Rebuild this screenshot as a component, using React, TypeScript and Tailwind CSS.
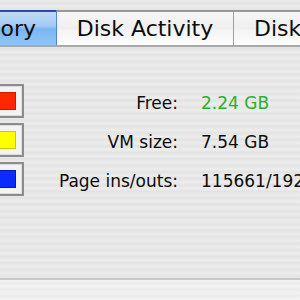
const rows = [
  { label: 'Free:', value: '2.24 GB', fill: 'bg-[#ff2600]', edge: 'border-[#c81c00]', green: true },
  { label: 'VM size:', value: '7.54 GB', fill: 'bg-[#ffff00]', edge: 'border-[#c9c900]', green: false },
  { label: 'Page ins/outs:', value: '115661/19286', fill: 'bg-[#0a2dff]', edge: 'border-[#0019b8]', green: false },
];

export default function App() {
  return (
    <div className="w-[300px] h-[300px] overflow-hidden flex flex-col font-['DejaVu_Sans',sans-serif] text-[#0d0d0d] bg-[image:repeating-linear-gradient(180deg,#ededed_0px,#e3e3e3_3px,#ededed_6.5px)]">
      <div className="h-[10px] shrink-0" />

      {/* tab strip */}
      <div className="flex h-[37px] shrink-0 border-t-2 border-b-2 border-t-[#999] border-b-[#a8a8a8] text-[22px] leading-none">
        <div className="ml-[-73px] w-[130px] shrink-0 flex items-center justify-end pr-[20px] border-r border-[#4f85d6] bg-[image:linear-gradient(180deg,#c4ddf6_0%,#a3cbf4_45%,#7ab6f5_55%,#8ec5f8_100%)] shadow-[inset_0_2px_0_#2a4aa8] -mt-[2px] pt-[2px]">
          Memory
        </div>
        <div className="w-[177px] shrink-0 flex items-center justify-center border-r border-[#a0a0a0] bg-[image:linear-gradient(180deg,#f7f7f7_0%,#efefef_50%,#f4f4f4_55%,#fdfdfd_100%)]">
          Disk Activity
        </div>
        <div className="flex-1 flex items-center pl-[20px] whitespace-nowrap bg-[image:linear-gradient(180deg,#f7f7f7_0%,#efefef_50%,#f4f4f4_55%,#fdfdfd_100%)]">
          Disk Usage
        </div>
      </div>

      {/* pane */}
      <div className="h-[233px] shrink-0 border-b-2 border-[#c8c8c8] pt-[37px] flex flex-col gap-[5px] text-[17px] leading-none">
        {rows.map((r) => (
          <div key={r.label} className="flex items-center h-[34px] whitespace-nowrap">
            <div className="ml-[-10px] w-[34px] h-[34px] shrink-0 border-2 border-[#8c8c8c] bg-[#f3f3f3] p-[6px] shadow-[inset_0_0_0_1px_#dcdcdc]">
              <div className={`w-full h-full border ${r.fill} ${r.edge}`} />
            </div>
            <div className="w-[154px] shrink-0 text-right pt-[4px]">{r.label}</div>
            <div className={`ml-[23px] pt-[4px] ${r.green ? 'text-[#27b227]' : ''}`}>{r.value}</div>
          </div>
        ))}
      </div>

      <div className="flex-1 bg-[image:repeating-linear-gradient(180deg,#f3f3f3_0px,#ebebeb_3px,#f3f3f3_6.5px)]" />
    </div>
  );
}
